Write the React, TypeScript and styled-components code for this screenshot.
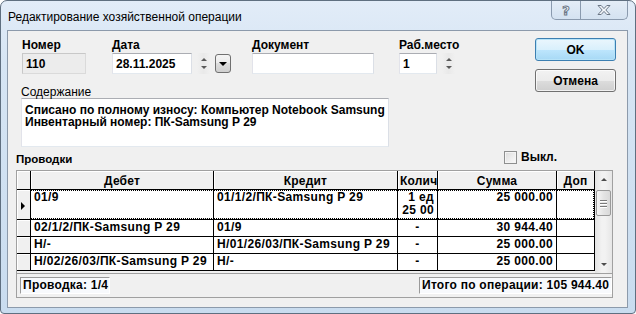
import React from "react";
import styled, { createGlobalStyle, css } from "styled-components";

interface Posting {
  debit: string;
  credit: string;
  qty: string[];
  sum: string;
  selected?: boolean;
}

const postings: Posting[] = [
  { debit: "01/9", credit: "01/1/2/ПК-Samsung P 29", qty: ["1 ед", "25 00"], sum: "25 000.00", selected: true },
  { debit: "02/1/2/ПК-Samsung P 29", credit: "01/9", qty: ["-"], sum: "30 944.40" },
  { debit: "Н/-", credit: "Н/01/26/03/ПК-Samsung P 29", qty: ["-"], sum: "25 000.00" },
  { debit: "Н/02/26/03/ПК-Samsung P 29", credit: "Н/-", qty: ["-"], sum: "25 000.00" },
];

const GlobalStyle = createGlobalStyle`
  html, body {
    margin: 0;
    padding: 0;
    background: #ffffff;
    overflow: hidden;
  }
  body {
    font-family: "Liberation Sans", Arial, sans-serif;
    font-size: 12px;
    color: #000;
  }
  * { box-sizing: border-box; }
`;

const Window = styled.div`
  width: 636px;
  height: 314px;
  border: 1px solid #5f6f80;
  border-radius: 7px 7px 4px 4px;
  background: linear-gradient(180deg, #e2ecf8 0%, #d6e5f4 20%, #c9dcef 100%);
  padding: 0 7px 5px 6px;
  display: flex;
  flex-direction: column;
`;

const TitleBar = styled.div`
  height: 29px;
  display: flex;
  justify-content: space-between;
  align-items: flex-start;
  flex-shrink: 0;
`;

const Title = styled.div`
  margin: 9px 0 0 1px;
  font-size: 12px;
  line-height: 14px;
  color: #000;
`;

const CaptionGroup = styled.div`
  display: flex;
  height: 19px;
  border: 1px solid #8a9aae;
  border-top: none;
  border-radius: 0 0 5px 5px;
  background: linear-gradient(180deg, #e4edf7, #d4e2f1);
  overflow: hidden;
`;

const CaptionButton = styled.div<{ $w: number }>`
  width: ${(p) => p.$w}px;
  display: flex;
  align-items: center;
  justify-content: center;
  & + & {
    border-left: 1px solid #8a9aae;
  }
`;

const HelpGlyph = styled.span`
  font-family: "DejaVu Sans", sans-serif;
  font-weight: bold;
  font-size: 13px;
  color: #f4f7fb;
  -webkit-text-stroke: 1px #6b7786;
`;

const Client = styled.div`
  flex: 1;
  border: 1px solid #8c9aab;
  background: #f0f0f0;
  padding: 7px 11px 0 8px;
  display: flex;
  flex-direction: column;
`;

const TopArea = styled.div`
  display: flex;
  align-items: flex-start;
`;

const LeftCol = styled.div`
  flex: 1;
  display: flex;
  flex-direction: column;
`;

const FieldsRow = styled.div`
  display: flex;
  align-items: flex-start;
  padding-left: 6px;
`;

const Field = styled.div<{ $gap?: number }>`
  display: flex;
  flex-direction: column;
  margin-left: ${(p) => p.$gap ?? 0}px;
`;

const Label = styled.div<{ $bold?: boolean }>`
  font-weight: ${(p) => (p.$bold ? "bold" : "normal")};
  line-height: 14px;
  height: 14px;
  margin-bottom: 1px;
  white-space: nowrap;
`;

const InputRow = styled.div`
  display: flex;
  align-items: flex-start;
`;

const TextBox = styled.div<{ $w: number; $disabled?: boolean }>`
  width: ${(p) => p.$w}px;
  height: 21px;
  padding: 3px 3px 0;
  line-height: 14px;
  font-weight: bold;
  white-space: nowrap;
  overflow: hidden;
  border: 1px solid;
  ${(p) =>
    p.$disabled
      ? css`
          background: #ececec;
          border-color: #c8c8c8 #dadada #dadada #c8c8c8;
        `
      : css`
          background: #fff;
          border-color: #abadb3 #dbdfe6 #e3e9ef #e2e3ea;
        `}
`;

const Spinner = styled.div`
  width: 13px;
  height: 21px;
  margin-left: 5px;
  display: flex;
  flex-direction: column;
  align-items: center;
  justify-content: space-around;
  padding: 3px 0;
  background: linear-gradient(90deg, #f0f0f0, #e9e9e9 50%, #f0f0f0);
`;

const Arrow = styled.span<{ $dir: "up" | "down"; $color?: string; $size?: number }>`
  width: 0;
  height: 0;
  border-left: ${(p) => p.$size ?? 3}px solid transparent;
  border-right: ${(p) => p.$size ?? 3}px solid transparent;
  ${(p) =>
    p.$dir === "up"
      ? css`border-bottom: ${p.$size ?? 3}px solid ${p.$color ?? "#5a5a5a"};`
      : css`border-top: ${p.$size ?? 3}px solid ${p.$color ?? "#5a5a5a"};`}
`;

const RightArrow = styled.span`
  width: 0;
  height: 0;
  border-top: 4px solid transparent;
  border-bottom: 4px solid transparent;
  border-left: 4px solid #000;
  margin: 12px 0 0 4px;
  display: block;
`;

const DropButton = styled.div`
  width: 16px;
  height: 19px;
  margin: 1px 0 0 5px;
  border: 1px solid #707070;
  border-radius: 3px;
  background: linear-gradient(180deg, #f4f4f4 0%, #ebebeb 50%, #dddddd 50%, #cfcfcf 100%);
  display: flex;
  align-items: center;
  justify-content: center;
`;

const ContentSection = styled.div`
  margin: 12px 0 0 5px;
`;

const ContentLabel = styled.div`
  line-height: 12px;
  height: 12px;
`;

const MemoBox = styled.div`
  width: 368px;
  height: 49px;
  background: #fff;
  border: 1px solid;
  border-color: #abadb3 #dbdfe6 #e3e9ef #e2e3ea;
  padding: 5px 3px 0;
  font-weight: bold;
  line-height: 12px;
  white-space: nowrap;
  overflow: hidden;
`;

const ButtonCol = styled.div`
  width: 81px;
  display: flex;
  flex-direction: column;
  gap: 8px;
`;

const DialogButton = styled.div<{ $default?: boolean }>`
  height: 23px;
  border: 1px solid #707070;
  border-radius: 3px;
  display: flex;
  align-items: center;
  justify-content: center;
  font-weight: bold;
  background: linear-gradient(180deg, #f2f2f2 0%, #ebebeb 50%, #dddddd 50%, #cfcfcf 100%);
  box-shadow: inset 0 0 0 1px rgba(255, 255, 255, 0.7);
  ${(p) =>
    p.$default &&
    css`
      border-color: #3c7fb1;
      background: linear-gradient(180deg, #eaf6fd 0%, #d9f0fc 50%, #bee6fd 50%, #a7d9f5 100%);
      box-shadow: inset 0 0 0 1px #b7e3f8;
    `}
`;

const PostingsBar = styled.div`
  display: flex;
  justify-content: space-between;
  align-items: center;
  margin-top: 3px;
  height: 14px;
  padding-right: 59px;
`;

const SectionTitle = styled.div`
  font-weight: bold;
  font-size: 11.5px;
  line-height: 14px;
  margin-top: 4px;
`;

const CheckWrap = styled.label`
  display: flex;
  align-items: center;
  gap: 4px;
  font-weight: bold;
`;

const CheckBox = styled.span`
  width: 13px;
  height: 13px;
  border: 1px solid #8e8f8f;
  background: linear-gradient(135deg, #dcdcdc, #fbfbfb);
  box-shadow: inset 0 0 0 1px #f4f4f4;
`;

const GridPanel = styled.div`
  margin: 6px 3px 0 0;
  border: 1px solid #a0a0a0;
  display: flex;
  flex-direction: column;
`;

const GridBox = styled.div`
  height: 103px;
  display: flex;
  border-bottom: 1px solid #a0a0a0;
  overflow: hidden;
`;

const TableArea = styled.div`
  width: 578px;
  background: #f0f0f0;
`;

const Table = styled.table`
  table-layout: fixed;
  border-collapse: separate;
  border-spacing: 0;
  width: 578px;
`;

const Col = styled.col<{ $w: number }>`
  width: ${(p) => p.$w}px;
`;

const HeadCell = styled.th`
  height: 19px;
  padding: 2px 2px 1px;
  background: #f0f0f0;
  border-right: 1px solid #000;
  border-bottom: 1px solid #000;
  box-shadow: inset 1px 1px 0 #fff;
  font-weight: bold;
  letter-spacing: 0.2px;
  text-align: center;
  line-height: 14px;
  white-space: nowrap;
  overflow: hidden;
`;

const IndicatorCell = styled.td`
  padding: 0;
  background: #f0f0f0;
  border-right: 1px solid #000;
  border-bottom: 1px solid #000;
  box-shadow: inset 1px 1px 0 #fff;
  vertical-align: top;
`;

const dotted = "repeating-linear-gradient(90deg, #000 0 1px, transparent 1px 2px)";
const dottedV = "repeating-linear-gradient(180deg, #000 0 1px, transparent 1px 2px)";

const Cell = styled.td<{ $align?: "left" | "right" | "center"; $sel?: boolean; $last?: boolean }>`
  background-color: #fff;
  border-right: 1px solid #000;
  border-bottom: 1px solid #000;
  padding: 1px 3px 0;
  vertical-align: top;
  font-weight: bold;
  letter-spacing: 0.35px;
  line-height: 13px;
  text-align: ${(p) => p.$align ?? "left"};
  white-space: nowrap;
  overflow: hidden;
  ${(p) =>
    p.$sel &&
    css`
      background-image: ${dotted}, ${dotted}${p.$last ? `, ${dottedV}` : ""};
      background-size: 100% 1px, 100% 1px${p.$last ? ", 1px 100%" : ""};
      background-position: top left, bottom left${p.$last ? ", top right" : ""};
      background-repeat: no-repeat;
    `}
`;

const Row = styled.tr<{ $h: number }>`
  height: ${(p) => p.$h}px;
`;

const ScrollBar = styled.div`
  width: 17px;
  display: flex;
  flex-direction: column;
  align-items: center;
  background: linear-gradient(90deg, #e3e3e3, #f2f2f2 40%, #f2f2f2 60%, #e6e6e6);
`;

const ScrollArrow = styled.div`
  height: 17px;
  width: 100%;
  display: flex;
  align-items: center;
  justify-content: center;
`;

const Thumb = styled.div`
  width: 15px;
  height: 26px;
  margin-top: 2px;
  border: 1px solid #9a9a9a;
  border-radius: 2px;
  background: linear-gradient(90deg, #f6f6f6, #e4e4e4 50%, #d9d9d9);
  display: flex;
  flex-direction: column;
  align-items: center;
  justify-content: center;
  gap: 2px;
`;

const Grip = styled.span`
  width: 7px;
  height: 1px;
  background: #7a7a7a;
  box-shadow: 0 1px 0 #ffffff;
`;

const ScrollSpacer = styled.div`
  flex: 1;
`;

const StatusRow = styled.div`
  display: flex;
  justify-content: space-between;
  padding: 3px 0 3px 3px;
`;

const StatusBox = styled.div<{ $w: number }>`
  width: ${(p) => p.$w}px;
  height: 17px;
  border: 1px solid;
  border-color: #9a9a9a #ffffff #ffffff #9a9a9a;
  background: #f7f9fc;
  padding: 0 2px;
  font-weight: bold;
  letter-spacing: 0.25px;
  line-height: 15px;
  white-space: nowrap;
`;

const CloseIcon = () => (
  <svg width="16" height="12" viewBox="0 0 16 12">
    <path
      d="M2 1.5h3.2L8 4.6l2.8-3.1H14L9.8 6l4.2 4.5h-3.2L8 7.4l-2.8 3.1H2L6.2 6z"
      fill="#f4f7fb"
      stroke="#6b7786"
      strokeWidth="1"
    />
  </svg>
);

export default function App() {
  return (
    <>
      <GlobalStyle />
      <Window>
        <TitleBar>
          <Title>Редактирование хозяйственной операции</Title>
          <CaptionGroup>
            <CaptionButton $w={28}>
              <HelpGlyph>?</HelpGlyph>
            </CaptionButton>
            <CaptionButton $w={47}>
              <CloseIcon />
            </CaptionButton>
          </CaptionGroup>
        </TitleBar>
        <Client>
          <TopArea>
            <LeftCol>
              <FieldsRow>
                <Field>
                  <Label $bold>Номер</Label>
                  <TextBox $w={64} $disabled>110</TextBox>
                </Field>
                <Field $gap={26}>
                  <Label $bold>Дата</Label>
                  <InputRow>
                    <TextBox $w={80}>28.11.2025</TextBox>
                    <Spinner>
                      <Arrow $dir="up" />
                      <Arrow $dir="down" />
                    </Spinner>
                    <DropButton>
                      <Arrow $dir="down" $color="#000" $size={4} />
                    </DropButton>
                  </InputRow>
                </Field>
                <Field $gap={21}>
                  <Label $bold>Документ</Label>
                  <TextBox $w={122} />
                </Field>
                <Field $gap={25}>
                  <Label $bold>Раб.место</Label>
                  <InputRow>
                    <TextBox $w={38}>1</TextBox>
                    <Spinner>
                      <Arrow $dir="up" />
                      <Arrow $dir="down" />
                    </Spinner>
                  </InputRow>
                </Field>
              </FieldsRow>
              <ContentSection>
                <ContentLabel>Содержание</ContentLabel>
                <MemoBox>
                  Списано по полному износу: Компьютер Notebook Samsung P 29
                  <br />
                  Инвентарный номер: ПК-Samsung P 29
                </MemoBox>
              </ContentSection>
            </LeftCol>
            <ButtonCol>
              <DialogButton $default>OK</DialogButton>
              <DialogButton>Отмена</DialogButton>
            </ButtonCol>
          </TopArea>

          <PostingsBar>
            <SectionTitle>Проводки</SectionTitle>
            <CheckWrap>
              <CheckBox />
              Выкл.
            </CheckWrap>
          </PostingsBar>

          <GridPanel>
            <GridBox>
              <TableArea>
                <Table>
                  <colgroup>
                    <Col $w={14} />
                    <Col $w={183} />
                    <Col $w={184} />
                    <Col $w={40} />
                    <Col $w={119} />
                    <Col $w={38} />
                  </colgroup>
                  <thead>
                    <Row $h={19}>
                      <HeadCell />
                      <HeadCell>Дебет</HeadCell>
                      <HeadCell>Кредит</HeadCell>
                      <HeadCell>Колич</HeadCell>
                      <HeadCell>Сумма</HeadCell>
                      <HeadCell>Доп</HeadCell>
                    </Row>
                  </thead>
                  <tbody>
                    {postings.map((p, i) => (
                      <Row key={i} $h={p.selected ? 30 : 17}>
                        <IndicatorCell>{p.selected && <RightArrow />}</IndicatorCell>
                        <Cell $sel={p.selected}>{p.debit}</Cell>
                        <Cell $sel={p.selected}>{p.credit}</Cell>
                        <Cell $sel={p.selected} $align={p.qty.length > 1 ? "right" : "center"}>
                          {p.qty.map((q, j) => (
                            <div key={j}>{q}</div>
                          ))}
                        </Cell>
                        <Cell $sel={p.selected} $align="right">
                          {p.sum}
                        </Cell>
                        <Cell $sel={p.selected} $last />
                      </Row>
                    ))}
                  </tbody>
                </Table>
              </TableArea>
              <ScrollBar>
                <ScrollArrow>
                  <Arrow $dir="up" $color="#4d4d4d" />
                </ScrollArrow>
                <Thumb>
                  <Grip />
                  <Grip />
                  <Grip />
                </Thumb>
                <ScrollSpacer />
                <ScrollArrow>
                  <Arrow $dir="down" $color="#4d4d4d" />
                </ScrollArrow>
              </ScrollBar>
            </GridBox>
            <StatusRow>
              <StatusBox $w={90}>Проводка: 1/4</StatusBox>
              <StatusBox $w={193}>Итого по операции: 105 944.40</StatusBox>
            </StatusRow>
          </GridPanel>
        </Client>
      </Window>
    </>
  );
}
